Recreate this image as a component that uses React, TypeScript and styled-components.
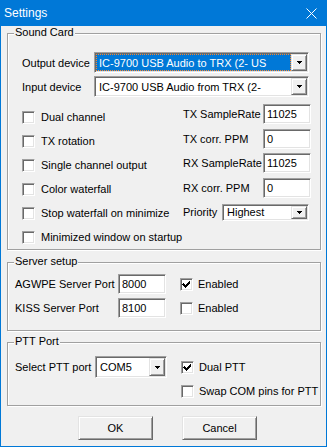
import React from "react"
import styled, { createGlobalStyle } from "styled-components"

const GlobalStyle = createGlobalStyle`
  html, body {
    margin: 0;
    padding: 0;
    background: #f0f0f0;
  }
  body {
    font-family: "Liberation Sans", Arial, sans-serif;
    font-size: 11px;
    color: #000;
  }
`

const Window = styled.div`
  width: 327px;
  height: 447px;
  box-sizing: border-box;
  border: 1px solid #0078d7;
  border-top: none;
  background: #f0f0f0;
  display: flex;
  flex-direction: column;
`

const TitleBar = styled.div`
  height: 26px;
  flex: none;
  background: #0078d7;
  color: #fff;
  font-size: 12px;
  display: flex;
  align-items: center;
  justify-content: space-between;
  padding: 0 9px 0 3px;
`

const Body = styled.div`
  padding: 7px 5px 0 6px;
  display: flex;
  flex-direction: column;
`

const Group = styled.div<{ $h: number; $mt?: number }>`
  position: relative;
  box-sizing: border-box;
  height: ${(p) => p.$h}px;
  margin-top: ${(p) => p.$mt ?? 0}px;
  border: 1px solid #a0a0a0;
  box-shadow: inset 1px 1px 0 #fff, 1px 1px 0 #fff;
`

const Legend = styled.span`
  position: absolute;
  top: -8px;
  left: 6px;
  padding: 0 1px;
  line-height: 13px;
  background: #f0f0f0;
`

const SoundBody = styled.div`
  padding: 18px 9px 0 14px;
`

const DeviceRow = styled.div<{ $mt?: number }>`
  display: flex;
  align-items: center;
  height: 21px;
  margin-top: ${(p) => p.$mt ?? 0}px;
  margin-right: 2px;
`

const Label = styled.span<{ $w?: number }>`
  flex: none;
  width: ${(p) => (p.$w ? `${p.$w}px` : "auto")};
  white-space: nowrap;
`

const sunken = `
  box-sizing: border-box;
  border-top: 1px solid #a0a0a0;
  border-left: 1px solid #a0a0a0;
  border-right: 1px solid #fff;
  border-bottom: 1px solid #fff;
  box-shadow: inset 1px 1px 0 #696969, inset -1px -1px 0 #e3e3e3;
  background: #fff;
`

const Combo = styled.div<{ $w?: number; $h: number }>`
  ${sunken}
  display: flex;
  flex: ${(p) => (p.$w ? "none" : "1")};
  width: ${(p) => (p.$w ? `${p.$w}px` : "auto")};
  height: ${(p) => p.$h}px;
  padding: 1px;
`

const ComboText = styled.div<{ $selected?: boolean }>`
  flex: 1;
  box-sizing: border-box;
  display: flex;
  align-items: center;
  padding-left: 2px;
  white-space: nowrap;
  overflow: hidden;
  background: ${(p) => (p.$selected ? "#0078d7" : "#fff")};
  color: ${(p) => (p.$selected ? "#fff" : "#000")};
  border: 1px ${(p) => (p.$selected ? "dotted #ff8728" : "solid transparent")};
`

const DropButton = styled.div`
  flex: none;
  width: 16px;
  box-sizing: border-box;
  background: #f0f0f0;
  border-top: 1px solid #e3e3e3;
  border-left: 1px solid #e3e3e3;
  border-right: 1px solid #696969;
  border-bottom: 1px solid #696969;
  box-shadow: inset 1px 1px 0 #fff, inset -1px -1px 0 #a0a0a0;
  display: flex;
  align-items: center;
  justify-content: center;
`

const Columns = styled.div`
  display: flex;
  margin-top: 7px;
`

const LeftColumn = styled.div`
  width: 161px;
  flex: none;
  padding-top: 1px;
  display: flex;
  flex-direction: column;
`

const RightColumn = styled.div`
  flex: 1;
  display: flex;
  flex-direction: column;
  gap: 4.5px;
`

const CheckRow = styled.div<{ $gap?: number }>`
  display: flex;
  align-items: center;
  height: 24px;
  gap: ${(p) => p.$gap ?? 5}px;
  white-space: nowrap;
`

const FieldRow = styled.div`
  display: flex;
  align-items: center;
  height: 20px;
`

const Box = styled.span`
  ${sunken}
  flex: none;
  width: 13px;
  height: 13px;
  display: flex;
  align-items: center;
  justify-content: center;
`

const Edit = styled.div<{ $w: number }>`
  ${sunken}
  flex: none;
  width: ${(p) => p.$w}px;
  height: 20px;
  padding: 1px 0 0 3px;
  line-height: 16px;
`

const ServerBody = styled.div`
  padding: 11px 0 0 7px;
  display: flex;
  flex-direction: column;
  gap: 4px;
`

const ServerRow = styled.div`
  display: flex;
  align-items: center;
  height: 20px;
`

const Spacer = styled.span<{ $w: number }>`
  flex: none;
  width: ${(p) => p.$w}px;
`

const PttBody = styled.div`
  padding: 12px 0 0 7px;
  display: flex;
  align-items: flex-start;
`

const PttPort = styled.div`
  display: flex;
  align-items: center;
  height: 24px;
`

const PttChecks = styled.div`
  margin-left: 14px;
  display: flex;
  flex-direction: column;
`

const ButtonBar = styled.div`
  display: flex;
  gap: 29px;
  margin-top: 10px;
  padding-left: 71px;
`

const Button = styled.button`
  width: 75px;
  height: 24px;
  box-sizing: border-box;
  font: inherit;
  color: #000;
  background: #f0f0f0;
  border-top: 1px solid #e3e3e3;
  border-left: 1px solid #e3e3e3;
  border-right: 1px solid #696969;
  border-bottom: 1px solid #696969;
  box-shadow: inset 1px 1px 0 #fff, inset -1px -1px 0 #a0a0a0;
  padding: 0;
`

const Arrow = () => (
  <svg width="5" height="3" viewBox="0 0 5 3" shapeRendering="crispEdges">
    <path d="M0 0h5v1h-1v1h-1v1h-1v-1h-1v-1h-1z" fill="#000" />
  </svg>
)

const Check = () => (
  <svg width="9" height="9" viewBox="0 0 9 9" shapeRendering="crispEdges">
    <path
      d="M1 3h1v1h1v1h1v-1h1v-1h1v-1h1v-1h1v3h-1v1h-1v1h-1v1h-1v1h-1v-1h-1v-1h-1v-1h-1z"
      fill="#000"
    />
  </svg>
)

const CheckBox: React.FC<{ on?: boolean; label: string; gap?: number }> = ({
  on,
  label,
  gap,
}) => (
  <CheckRow $gap={gap}>
    <Box>{on && <Check />}</Box>
    <span>{label}</span>
  </CheckRow>
)

const ComboBox: React.FC<{
  value: string
  w?: number
  h: number
  selected?: boolean
}> = ({ value, w, h, selected }) => (
  <Combo $w={w} $h={h}>
    <ComboText $selected={selected}>{value}</ComboText>
    <DropButton>
      <Arrow />
    </DropButton>
  </Combo>
)

export default function App() {
  return (
    <>
      <GlobalStyle />
      <Window>
        <TitleBar>
          <span>Settings</span>
          <svg width="11" height="11" viewBox="0 0 11 11">
            <path d="M0.5 0.5L10.5 10.5M10.5 0.5L0.5 10.5" stroke="#fff" strokeWidth="1" />
          </svg>
        </TitleBar>
        <Body>
          <Group $h={217}>
            <Legend>Sound Card</Legend>
            <SoundBody>
              <DeviceRow>
                <Label $w={72}>Output device</Label>
                <ComboBox value="IC-9700 USB Audio to TRX (2- US" h={21} selected />
              </DeviceRow>
              <DeviceRow $mt={3}>
                <Label $w={72}>Input device</Label>
                <ComboBox value="IC-9700 USB Audio from TRX (2-" h={21} />
              </DeviceRow>
              <Columns>
                <LeftColumn>
                  <CheckBox label="Dual channel" gap={6} />
                  <CheckBox label="TX rotation" gap={6} />
                  <CheckBox label="Single channel output" gap={6} />
                  <CheckBox label="Color waterfall" gap={6} />
                  <CheckBox label="Stop waterfall on minimize" gap={6} />
                  <CheckBox label="Minimized window on startup" gap={6} />
                </LeftColumn>
                <RightColumn>
                  <FieldRow>
                    <Label $w={80}>TX SampleRate</Label>
                    <Edit $w={48}>11025</Edit>
                  </FieldRow>
                  <FieldRow>
                    <Label $w={80}>TX corr. PPM</Label>
                    <Edit $w={48}>0</Edit>
                  </FieldRow>
                  <FieldRow>
                    <Label $w={80}>RX SampleRate</Label>
                    <Edit $w={48}>11025</Edit>
                  </FieldRow>
                  <FieldRow>
                    <Label $w={80}>RX corr. PPM</Label>
                    <Edit $w={48}>0</Edit>
                  </FieldRow>
                  <FieldRow>
                    <Label $w={39}>Priority</Label>
                    <ComboBox value="Highest" w={87} h={17} />
                  </FieldRow>
                </RightColumn>
              </Columns>
            </SoundBody>
          </Group>

          <Group $h={69} $mt={12}>
            <Legend>Server setup</Legend>
            <ServerBody>
              <ServerRow>
                <Label $w={103}>AGWPE Server Port</Label>
                <Edit $w={48}>8000</Edit>
                <Spacer $w={14} />
                <CheckBox on label="Enabled" />
              </ServerRow>
              <ServerRow>
                <Label $w={103}>KISS Server Port</Label>
                <Edit $w={48}>8100</Edit>
                <Spacer $w={14} />
                <CheckBox label="Enabled" />
              </ServerRow>
            </ServerBody>
          </Group>

          <Group $h={64} $mt={11}>
            <Legend>PTT Port</Legend>
            <PttBody>
              <PttPort>
                <Label $w={80}>Select PTT port</Label>
                <ComboBox value="COM5" w={72} h={22} />
              </PttPort>
              <PttChecks>
                <CheckBox on label="Dual PTT" />
                <CheckBox label="Swap COM pins for PTT" />
              </PttChecks>
            </PttBody>
          </Group>

          <ButtonBar>
            <Button>OK</Button>
            <Button>Cancel</Button>
          </ButtonBar>
        </Body>
      </Window>
    </>
  )
}
